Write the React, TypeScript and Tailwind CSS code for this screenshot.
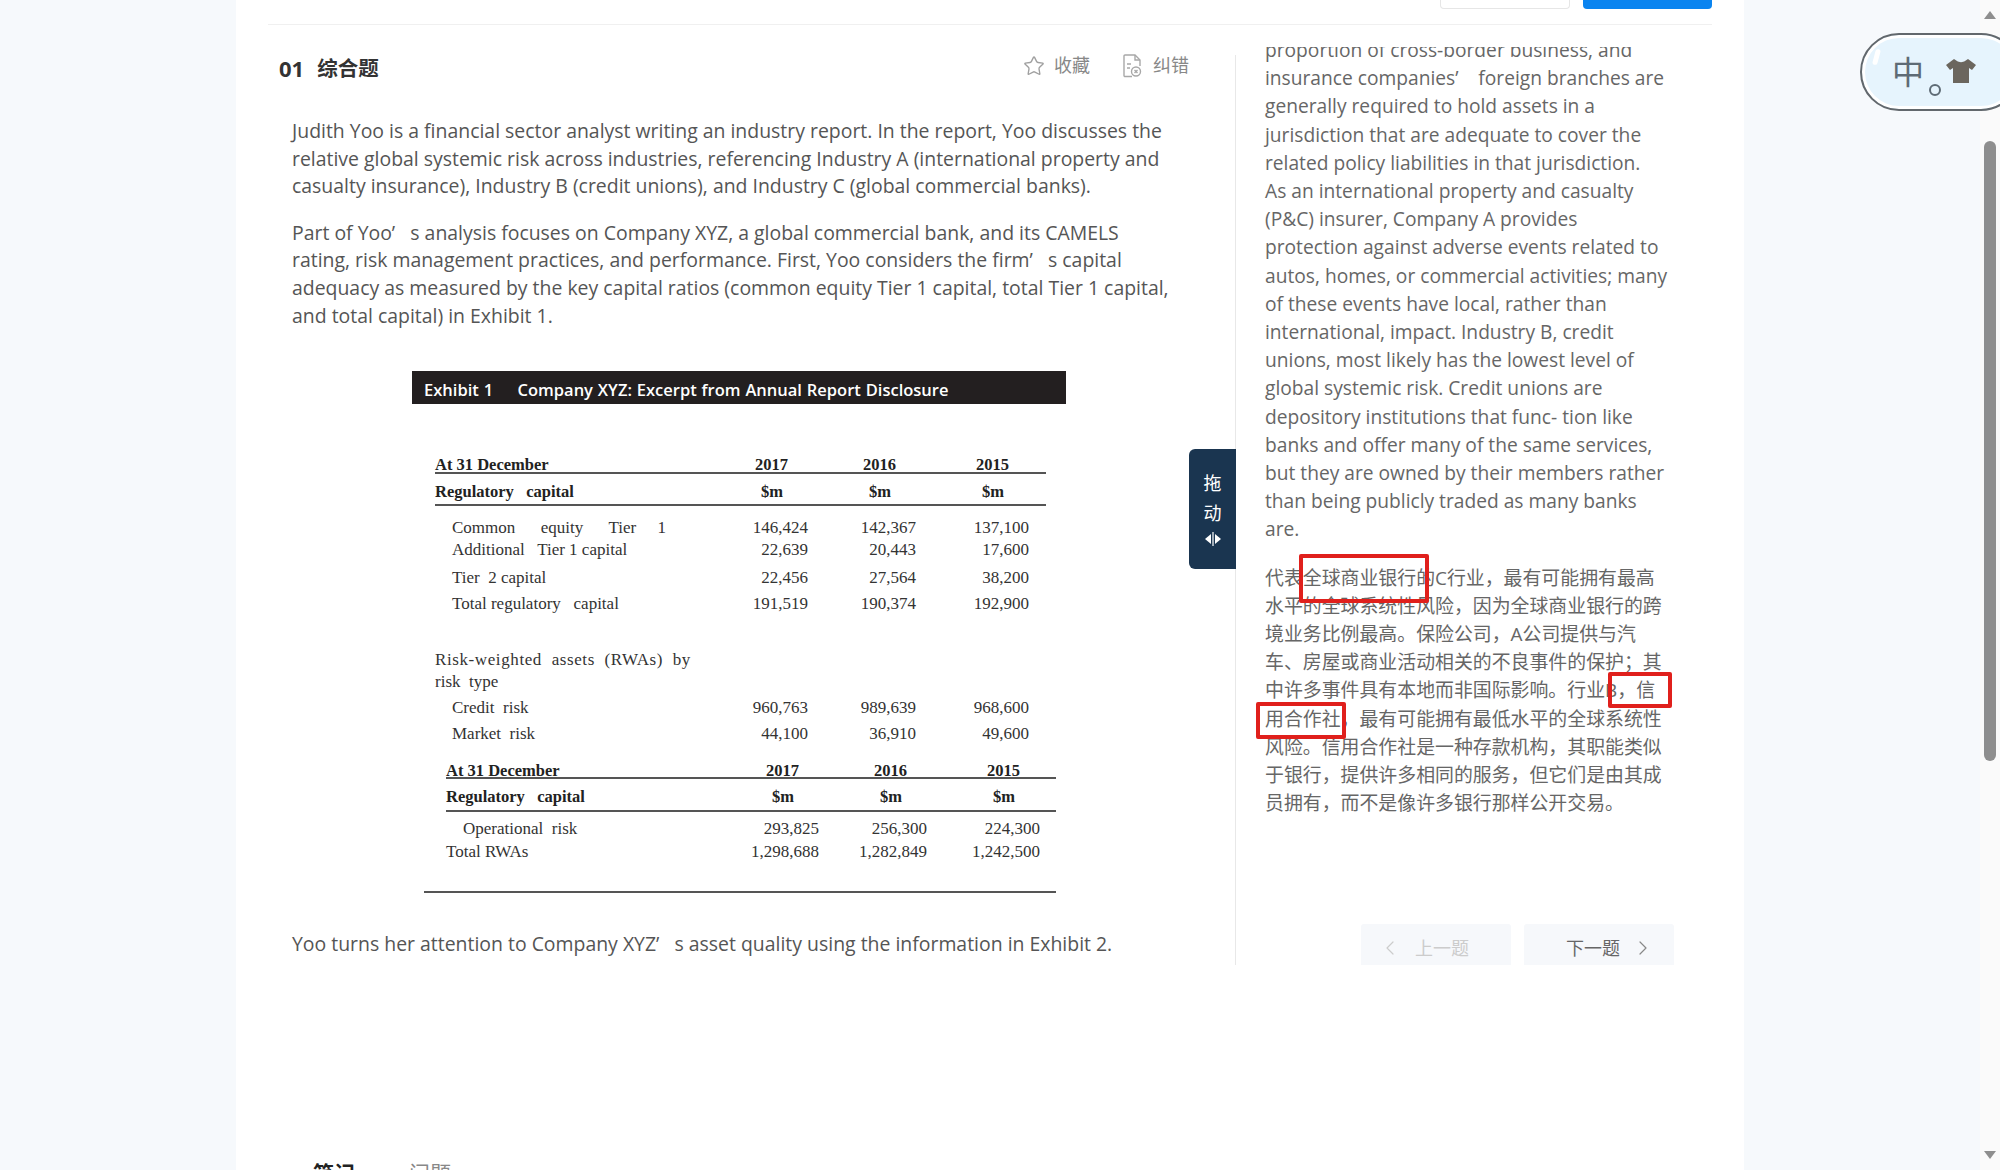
import { ChevronLeft, ChevronRight, Star } from 'lucide-react'

const SANS = { fontFamily: '"Open Sans", "Noto Sans CJK SC", sans-serif' }

const INTRO = [
  [
    'Judith Yoo is a financial sector analyst writing an industry report. In the report, Yoo discusses the',
    'relative global systemic risk across industries, referencing Industry A (international property and',
    'casualty insurance), Industry B (credit unions), and Industry C (global commercial banks).',
  ],
  [
    'Part of Yoo’   s analysis focuses on Company XYZ, a global commercial bank, and its CAMELS',
    'rating, risk management practices, and performance. First, Yoo considers the firm’   s capital',
    'adequacy as measured by the key capital ratios (common equity Tier 1 capital, total Tier 1 capital,',
    'and total capital) in Exhibit 1.',
  ],
]

const ANSWER_EN = [
  'proportion of cross-border business, and',
  'insurance companies’    foreign branches are',
  'generally required to hold assets in a',
  'jurisdiction that are adequate to cover the',
  'related policy liabilities in that jurisdiction.',
  'As an international property and casualty',
  '(P&C) insurer, Company A provides',
  'protection against adverse events related to',
  'autos, homes, or commercial activities; many',
  'of these events have local, rather than',
  'international, impact. Industry B, credit',
  'unions, most likely has the lowest level of',
  'global systemic risk. Credit unions are',
  'depository institutions that func- tion like',
  'banks and offer many of the same services,',
  'but they are owned by their members rather',
  'than being publicly traded as many banks',
  'are.',
]

const ANSWER_ZH = [
  '代表全球商业银行的C行业，最有可能拥有最高',
  '水平的全球系统性风险，因为全球商业银行的跨',
  '境业务比例最高。保险公司，A公司提供与汽',
  '车、房屋或商业活动相关的不良事件的保护；其',
  '中许多事件具有本地而非国际影响。行业B，信',
  '用合作社，最有可能拥有最低水平的全球系统性',
  '风险。信用合作社是一种存款机构，其职能类似',
  '于银行，提供许多相同的服务，但它们是由其成',
  '员拥有，而不是像许多银行那样公开交易。',
]

function Row({ label, vals, className, labelClass }: { label: string; vals: string[]; className: string; labelClass?: string }) {
  return (
    <div className={`grid grid-cols-[265px_108px_108px_113px] items-center whitespace-pre text-[17px] leading-none text-[#333] ${className}`}>
      <span className={labelClass ?? 'pl-[17px]'}>{label}</span>
      {vals.map((v, i) => (
        <span key={i} className="text-right">{v}</span>
      ))}
    </div>
  )
}

function HeadRow({ label, vals, unit, className }: { label: string; vals: string[]; unit?: boolean; className: string }) {
  return (
    <div className={`grid grid-cols-[265px_108px_108px_113px] items-center whitespace-pre border-b-2 border-[#555] text-[16.5px] font-bold leading-none text-[#222] ${className}`}>
      <span>{label}</span>
      {vals.map((v, i) => (
        <span key={i} className={unit ? 'pr-[25px] text-right' : 'pr-[20px] text-right'}>{v}</span>
      ))}
    </div>
  )
}

function Exhibit() {
  return (
    <div className="ml-[144px] w-[654px]" style={{ fontFamily: '"Liberation Serif", serif' }}>
      <div className="flex h-[33px] items-center whitespace-pre bg-[#231f20] pl-[12px] pt-[5px] text-[16.5px] font-semibold text-white [word-spacing:0.6px]" style={SANS}>
        Exhibit 1     Company XYZ: Excerpt from Annual Report Disclosure
      </div>
      <div className="ml-[23px] mt-[50px] w-[611px]">
        <HeadRow className="h-[20px] pt-[3px]" label="At 31 December" vals={['2017', '2016', '2015']} />
        <HeadRow className="h-[32px] pt-[6px]" label="Regulatory   capital" vals={['$m', '$m', '$m']} unit />
        <Row className="mt-[10px] h-[22px]" label="Common      equity      Tier     1" vals={['146,424', '142,367', '137,100']} />
        <Row className="h-[22px]" label="Additional   Tier 1 capital" vals={['22,639', '20,443', '17,600']} />
        <Row className="mt-[6px] h-[22px]" label="Tier  2 capital" vals={['22,456', '27,564', '38,200']} />
        <Row className="mt-[4px] h-[22px]" label="Total regulatory   capital" vals={['191,519', '190,374', '192,900']} />
        <Row className="mt-[34px] h-[22px]" labelClass="tracking-[0.6px]" label="Risk-weighted  assets  (RWAs)  by" vals={[]} />
        <Row className="h-[22px]" labelClass="" label="risk  type" vals={[]} />
        <Row className="mt-[4px] h-[22px]" label="Credit  risk" vals={['960,763', '989,639', '968,600']} />
        <Row className="mt-[4px] h-[22px]" label="Market  risk" vals={['44,100', '36,910', '49,600']} />
      </div>
      <div className="ml-[34px] mt-[16px] w-[610px]">
        <HeadRow className="h-[19px] pt-[3px]" label="At 31 December" vals={['2017', '2016', '2015']} />
        <HeadRow className="h-[33px] pt-[6px]" label="Regulatory   capital" vals={['$m', '$m', '$m']} unit />
        <Row className="mt-[5px] h-[22px]" label="Operational  risk" vals={['293,825', '256,300', '224,300']} />
        <Row className="mt-[1px] h-[22px]" labelClass="" label="Total RWAs" vals={['1,298,688', '1,282,849', '1,242,500']} />
      </div>
      <div className="ml-[12px] mt-[29px] h-[2px] w-[632px] bg-[#555]" />
    </div>
  )
}

function DocIcon() {
  return (
    <svg width="20" height="24" viewBox="0 0 20 24" fill="none" stroke="#a8a8a8" strokeWidth="1.4">
      <path d="M10 22.500H3a1 1 0 0 1-1-1V2a1 1 0 0 1 1-1h10l5 5v6" />
      <path d="M13 1v5h5" />
      <path d="M5 10h4M5 14h3" />
      <circle cx="14" cy="17.500" r="4.500" />
      <path d="M12.500 16l3 3M15.500 16l-3 3" />
    </svg>
  )
}

function Question() {
  return (
    <div className="w-[967px] shrink-0">
      <div className="flex h-[26px] items-center justify-between pl-[11px] pr-[46px]">
        <div className="flex items-center gap-[13px] font-bold leading-none text-[#333]">
          <span className="text-[22px]">01</span>
          <span className="text-[20.5px]">综合题</span>
        </div>
        <div className="-mt-[5px] flex items-center text-[18px] text-[#888]">
          <Star size={22} strokeWidth={1.5} className="text-[#a0a0a0]" />
          <span className="ml-[9px]">收藏</span>
          <span className="ml-[32px]"><DocIcon /></span>
          <span className="ml-[11px]">纠错</span>
        </div>
      </div>
      <div className="pl-[24px] pt-[36px] text-[19.430px] leading-[27.6px] text-[#555]">
        {INTRO.map((para, i) => (
          <p key={i} className="mb-[19px] whitespace-pre">
            {para.map((line) => (
              <span key={line} className="block">{line}</span>
            ))}
          </p>
        ))}
      </div>
      <div className="mt-[42px]">
        <Exhibit />
      </div>
      <p className="mt-[37px] whitespace-pre pl-[24px] text-[19.430px] leading-[27.6px] text-[#555]">
        Yoo turns her attention to Company XYZ’   s asset quality using the information in Exhibit 2.
      </p>
    </div>
  )
}

function Answer() {
  return (
    <div className="relative h-[910px] w-[445px] shrink-0 border-l border-[#e8e8e8]">
      {/* drag handle */}
      <div className="absolute left-[-47px] top-[394px] flex h-[120px] w-[47px] flex-col items-center rounded-l-[6px] bg-[#1a3550] pt-[19px] text-[18px] leading-[30px] text-white">
        <span>拖</span>
        <span>动</span>
        <svg width="16" height="14" viewBox="0 0 16 14" fill="#fff" className="mt-[4px]">
          <path d="M6 2v10L0 7z" />
          <path d="M10 2v10l6-5z" />
          <rect x="7.400" y="0" width="1.200" height="14" />
        </svg>
      </div>

      {/* the scrolled text runs a little above the divider */}
      <div className="-mt-[8px] h-[918px] overflow-hidden">
        <div className="-mt-[11px] whitespace-pre pl-[29px] text-[19.200px] leading-[28.2px] text-[#666]">
          {ANSWER_EN.map((line) => (
            <div key={line}>{line}</div>
          ))}
          <div className="mt-[20px] text-[18.900px]">
            {ANSWER_ZH.map((line) => (
              <div key={line}>{line}</div>
            ))}
          </div>
        </div>
      </div>

      {/* red marks */}
      <div className="absolute left-[63px] top-[499px] h-[49px] w-[130px] rounded-[2px] border-[4px] border-[#e0201c]" />
      <div className="absolute left-[372px] top-[617px] h-[36px] w-[64px] rounded-[2px] border-[4px] border-[#e0201c]" />
      <div className="absolute left-[20px] top-[647px] h-[37px] w-[90px] rounded-[2px] border-[4px] border-[#e0201c]" />

      {/* prev / next */}
      <div className="absolute left-[125px] top-[869px] flex gap-[13px]">
        <div className="flex h-[41px] w-[150px] items-center rounded-t-[3px] bg-[#f6f8fb] pl-[17px] pt-[7px] text-[18px] text-[#ccc]">
          <ChevronLeft size={24} strokeWidth={1.2} />
          <span className="ml-[13px]">上一题</span>
        </div>
        <div className="flex h-[41px] w-[150px] items-center rounded-t-[3px] bg-[#f6f8fb] pl-[42px] pt-[7px] text-[18px] text-[#666]">
          <span>下一题</span>
          <ChevronRight size={24} strokeWidth={1.2} className="ml-[11px] text-[#888]" />
        </div>
      </div>
    </div>
  )
}

function Scrollbar() {
  return (
    <div className="flex h-full w-[20px] shrink-0 flex-col items-center bg-[#fafafa]">
      <div className="mt-[11px] h-0 w-0 border-x-[6px] border-b-[8px] border-x-transparent border-b-[#8e8e8e]" />
      <div className="mt-[122px] h-[620px] w-[12px] rounded-[6px] bg-[#8e8e8e]" />
      <div className="mb-[11px] mt-auto h-0 w-0 border-x-[6px] border-t-[8px] border-x-transparent border-t-[#8e8e8e]" />
    </div>
  )
}

function ImeBadge() {
  return (
    <div className="absolute left-[1860px] top-[33px] flex h-[78px] w-[160px] items-center rounded-full border-[2px] border-[#62686d] bg-[#e6f4fd] pl-[30px] shadow-[inset_0_0_0_3px_#fff]">
      <span className="absolute left-[12px] top-[14px] h-[16px] w-[5px] rotate-[15deg] rounded-full bg-white" />
      <span className="text-[32px] leading-none text-[#5e6b75]">中</span>
      <span className="ml-[5px] mt-[36px] h-[12px] w-[12px] rounded-full border-[2px] border-[#5e6b75]" />
      <svg width="32" height="26" viewBox="0 0 32 26" fill="#6b665e" className="-mt-[3px] ml-[4px]">
        <path d="M9 1l3 2c2 1.500 6 1.500 8 0l3-2 8 6-4 5-3-2v15H8V10l-3 2-4-5z" />
      </svg>
    </div>
  )
}

export default function App() {
  return (
    <div className="relative flex h-[1170px] w-[2000px] overflow-hidden bg-[#f6f9fc]" style={SANS}>
      <main className="ml-[236px] flex h-full w-[1508px] shrink-0 flex-col bg-white px-[32px]">
        <div className="flex h-[25px] shrink-0 justify-end gap-[13px] border-b border-[#f0f0f0]">
          <div className="h-[9px] w-[130px] rounded-b-[4px] border border-t-0 border-[#e6e6e6] bg-white" />
          <div className="h-[9px] w-[129px] rounded-b-[4px] bg-[#0a84f0]" />
        </div>
        <div className="mt-[30px] flex">
          <Question />
          <Answer />
        </div>
        <div className="mt-[198px] flex shrink-0 gap-[54px] pl-[45px] text-[21px] leading-none">
          <span className="font-bold text-[#222]">笔记</span>
          <span className="text-[#888]">问题</span>
        </div>
      </main>
      <div className="flex-1" />
      <Scrollbar />
      <ImeBadge />
    </div>
  )
}
